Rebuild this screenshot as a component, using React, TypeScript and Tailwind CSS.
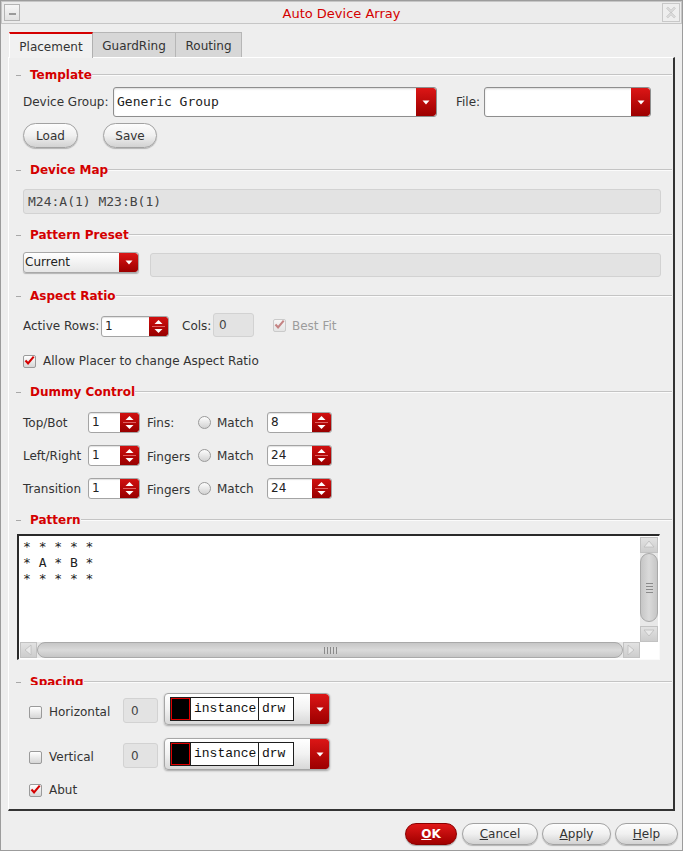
import React from "react";

function DownTri() {
  return (
    <svg width="8" height="5" viewBox="0 0 8 5">
      <path d="M0.5 0.5h7L4 4.5z" fill="#fff" />
    </svg>
  );
}

function DropBtn({ className = "" }: { className?: string }) {
  return (
    <div
      className={
        "flex items-center justify-center self-stretch bg-linear-to-b from-[#dc1616] to-[#9c0000] rounded-r-[3px] " +
        className
      }
    >
      <DownTri />
    </div>
  );
}

function SpinBtn() {
  return (
    <div className="w-[19px] self-stretch rounded-r-[2px] bg-linear-to-b from-[#d01010] to-[#980000] flex flex-col items-center justify-center">
      <svg width="9" height="6" viewBox="0 0 9 6">
        <path d="M0.5 5L4.5 1L8.5 5z" fill="#fff" />
      </svg>
      <div className="w-[13px] h-px bg-[#e06060] my-[1px]" />
      <svg width="9" height="6" viewBox="0 0 9 6">
        <path d="M0.5 1L4.5 5L8.5 1z" fill="#fff" />
      </svg>
    </div>
  );
}

function SpinBox({ value, className }: { value: string; className: string }) {
  return (
    <div
      className={
        "flex h-[21px] rounded-[3px] border border-[#a4a4a4] bg-white overflow-hidden shadow-[inset_0_1px_1px_rgba(0,0,0,0.12)] " +
        className
      }
    >
      <div className="flex-1 pl-[3px] leading-[19px] text-[12px] text-[#222]">{value}</div>
      <SpinBtn />
    </div>
  );
}

function Check({ checked, disabled, className = "" }: { checked?: boolean; disabled?: boolean; className?: string }) {
  return (
    <div
      className={
        "w-[13px] h-[13px] shrink-0 rounded-[2px] border flex items-center justify-center " +
        (disabled
          ? "border-[#cacaca] bg-linear-to-b from-[#f6f6f6] to-[#e4e4e4] "
          : "border-[#9a9a9a] bg-linear-to-b from-[#ffffff] to-[#d6d6d6] ") +
        className
      }
    >
      {checked && (
        <svg width="12" height="11" viewBox="0 0 12 11" className="-mt-[1px]">
          <path
            d="M1.6 5.6L4.4 8.6L10.6 1.2"
            fill="none"
            stroke={disabled ? "#c48383" : "#d40000"}
            strokeWidth="2.3"
          />
        </svg>
      )}
    </div>
  );
}

function Radio() {
  return (
    <div className="w-[13px] h-[13px] shrink-0 rounded-full border border-[#9a9a9a] bg-linear-to-b from-[#fdfdfd] to-[#d2d2d2]" />
  );
}

function Header({ title, className = "" }: { title: string; className?: string }) {
  return (
    <div className={"flex items-center h-[14px] " + className}>
      <div className="ml-[7px] w-[5px] h-px bg-[#a8a8a8]" />
      <div className="ml-[9px] font-bold text-[12px] leading-[14px] text-[#d40000] whitespace-nowrap">
        {title}
      </div>
      <div className="flex-1 mr-[1px] h-[2px] border-t border-t-[#c4c4c4] border-b border-b-[#fbfbfb]" />
    </div>
  );
}

function PillBtn({ children, className = "" }: { children: React.ReactNode; className?: string }) {
  return (
    <div
      className={
        "flex items-center justify-center rounded-full border border-[#a2a2a2] bg-linear-to-b from-[#fdfdfd] via-[#f0f0f0] to-[#d2d2d2] shadow-[0_1px_1px_rgba(0,0,0,0.25)] text-[12px] text-[#333] " +
        className
      }
    >
      {children}
    </div>
  );
}

function GrayField({ children, className = "" }: { children?: React.ReactNode; className?: string }) {
  return (
    <div
      className={
        "rounded-[3px] border border-[#d2d2d2] bg-[#e3e3e3] text-[#444] flex items-center " + className
      }
    >
      {children}
    </div>
  );
}

function LayerCombo() {
  return (
    <div className="ml-[6px] w-[166px] h-[32px] rounded-[4px] border border-[#a6a6a6] bg-linear-to-b from-[#ffffff] via-[#f2f2f2] to-[#d8d8d8] flex items-center shadow-[0_1px_2px_rgba(0,0,0,0.3)] overflow-hidden">
      <div className="ml-[5px] flex h-[24px] border border-[#1e1e1e] bg-white">
        <div className="w-[19px] p-px bg-[#e00000]">
          <div className="w-full h-full bg-black" />
        </div>
        <div className="w-[68px] border-l border-[#1e1e1e] pl-[3px] leading-[22px] text-[13px] text-[#111] font-['Liberation_Mono',monospace]">
          instance
        </div>
        <div className="w-[35px] border-l border-[#1e1e1e] pl-[3px] leading-[22px] text-[13px] text-[#111] font-['Liberation_Mono',monospace]">
          drw
        </div>
      </div>
      <div className="flex-1" />
      <DropBtn className="w-[19px]" />
    </div>
  );
}

function ScrollArrow({ dir, className = "" }: { dir: "up" | "down" | "left" | "right"; className?: string }) {
  const paths: Record<string, string> = {
    up: "M2 9L7 3L12 9z",
    down: "M2 3L7 9L12 3z",
    left: "M9 2L3 7L9 12z",
    right: "M3 2L9 7L3 12z",
  };
  return (
    <div
      className={
        "flex items-center justify-center bg-linear-to-b from-[#e2e2e2] to-[#cdcdcd] border border-[#c2c2c2] " +
        className
      }
    >
      <svg width="14" height="14" viewBox="0 0 14 14">
        <path d={paths[dir]} fill="#e9e9e9" stroke="#bdbdbd" strokeWidth="0.8" />
      </svg>
    </div>
  );
}

export default function App() {
  return (
    <div className="w-[683px] h-[851px] border border-[#9c9c9c] bg-[#eeeeee] font-['DejaVu_Sans',sans-serif] text-[12px] text-[#333] flex flex-col overflow-hidden">
      {/* Title bar */}
      <div className="h-[23px] border border-[#c6c6c6] bg-[#ececec] flex items-center">
        <div className="w-[26px] flex items-center">
          <div className="ml-[2px] w-[16px] h-[17px] border border-[#b4b4b4] bg-linear-to-b from-[#f6f6f6] to-[#e2e2e2] flex items-end justify-center pb-[5px]">
            <div className="w-[7px] h-[2px] bg-[#9a9a9a]" />
          </div>
        </div>
        <div className="flex-1 text-center text-[13px] text-[#d40000] leading-[21px] pt-px">Auto Device Array</div>
        <div className="w-[26px] flex justify-end">
          <div className="mr-[1px] w-[18px] h-[19px] border border-[#c8c8c8] bg-[#eeeeee] flex items-center justify-center">
            <svg width="12" height="13" viewBox="0 0 12 13">
              <path
                d="M2 1.5L6 5.5L10 1.5M2 11.5L6 7.5L10 11.5"
                fill="none"
                stroke="#c2c2c2"
                strokeWidth="2.4"
              />
              <path
                d="M2 1.5L6 5.5L10 1.5M2 11.5L6 7.5L10 11.5"
                fill="none"
                stroke="#f4f4f4"
                strokeWidth="0.9"
              />
            </svg>
          </div>
        </div>
      </div>

      {/* Tabs */}
      <div className="mt-[8px] ml-[8px] flex h-[25px] items-start">
        <div className="relative z-10 w-[84px] h-[26px] border-t-2 border-t-[#d40000] border-l border-l-white border-r border-r-[#b0b0b0] bg-[#f1f1f1] flex items-center justify-center pt-[1px]">
          Placement
        </div>
        <div className="w-[83px] h-[25px] border-t border-[#b6b6b6] border-r bg-[#d7d7d7] flex items-center justify-center pt-[2px]">
          GuardRing
        </div>
        <div className="w-[66px] h-[25px] border-t border-[#b6b6b6] border-r bg-[#d7d7d7] flex items-center justify-center pt-[2px]">
          Routing
        </div>
      </div>

      {/* Panel */}
      <div className="ml-[7px] w-[667px] h-[754px] border-t border-l border-t-white border-l-white border-r-2 border-b-2 border-r-[#333] border-b-[#333] flex flex-col">
        <Header title="Template" className="mt-[10px]" />
        <div className="mt-[5px] ml-[14px] flex items-center h-[30px]">
          <div className="w-[90px] whitespace-nowrap">Device Group:</div>
          <div className="w-[324px] h-[30px] flex rounded-[3px] border border-[#8e8e8e] bg-white shadow-[inset_0_1px_2px_rgba(0,0,0,0.15)] overflow-hidden">
            <div className="flex-1 pl-[3px] leading-[28px] text-[13px] text-[#222] font-['DejaVu_Sans_Mono',monospace]">
              Generic Group
            </div>
            <DropBtn className="w-[20px]" />
          </div>
          <div className="ml-[19px] w-[28px]">File:</div>
          <div className="w-[167px] h-[30px] flex rounded-[3px] border border-[#8e8e8e] bg-white shadow-[inset_0_1px_2px_rgba(0,0,0,0.15)] overflow-hidden">
            <div className="flex-1" />
            <DropBtn className="w-[19px]" />
          </div>
        </div>
        <div className="mt-[6px] ml-[14px] flex h-[25px]">
          <PillBtn className="w-[55px] h-[25px]">Load</PillBtn>
          <PillBtn className="ml-[25px] w-[54px] h-[25px]">Save</PillBtn>
        </div>

        <Header title="Device Map" className="mt-[15px]" />
        <GrayField className="mt-[12px] ml-[14px] w-[638px] h-[25px] pl-[4px] text-[13px] text-[#333] font-['DejaVu_Sans_Mono',monospace]">
          M24:A(1) M23:B(1)
        </GrayField>

        <Header title="Pattern Preset" className="mt-[14px]" />
        <div className="mt-[10px] ml-[14px] flex items-start h-[25px]">
          <div className="w-[116px] h-[21px] flex rounded-[3px] border border-[#a8a8a8] bg-linear-to-b from-[#ffffff] to-[#e6e6e6] shadow-[0_1px_1px_rgba(0,0,0,0.25)] overflow-hidden">
            <div className="flex-1 pl-[1px] leading-[19px] text-[12px] text-[#222]">Current</div>
            <DropBtn className="w-[19px]" />
          </div>
          <GrayField className="mt-[1px] ml-[11px] w-[511px] h-[24px]" />
        </div>

        <Header title="Aspect Ratio" className="mt-[12px]" />
        <div className="mt-[10px] ml-[14px] flex items-center h-[24px]">
          <div className="w-[78px] whitespace-nowrap pt-[2px]">Active Rows:</div>
          <SpinBox value="1" className="w-[68px] mt-[2px]" />
          <div className="ml-[13px] w-[31px] pt-[2px]">Cols:</div>
          <GrayField className="w-[41px] h-[24px] pl-[5px]">0</GrayField>
          <div className="ml-[19px]">
            <Check checked disabled />
          </div>
          <div className="ml-[6px] text-[#9c9c9c] pt-[1px]">Best Fit</div>
        </div>
        <div className="mt-[17px] ml-[14px] flex items-center h-[14px]">
          <Check checked />
          <div className="ml-[7px]">Allow Placer to change Aspect Ratio</div>
        </div>

        <Header title="Dummy Control" className="mt-[17px]" />
        <div className="mt-[13px] ml-[14px] flex flex-col gap-[12px]">
          {[
            { l: "Top/Bot", l2: "Fins:", v: "8" },
            { l: "Left/Right", l2: "Fingers", v: "24" },
            { l: "Transition", l2: "Fingers", v: "24" },
          ].map((r) => (
            <div key={r.l} className="flex items-center h-[21px]">
              <div className="w-[65px] whitespace-nowrap">{r.l}</div>
              <SpinBox value="1" className="w-[52px]" />
              <div className={"ml-[7px] w-[51px] whitespace-nowrap " + (r.l2 === "Fins:" ? "" : "pt-[3px]")}>
                {r.l2}
              </div>
              <Radio />
              <div className="ml-[6px] w-[50px]">Match</div>
              <SpinBox value={r.v} className="w-[65px]" />
            </div>
          ))}
        </div>

        <Header title="Pattern" className="mt-[14px]" />
        <div className="mt-[7px] ml-[8px] w-[643px] h-[126px] border-t-2 border-l-2 border-t-[#2a2a2a] border-l-[#2a2a2a] border-r border-b border-r-[#fafafa] border-b-[#fafafa] bg-white flex flex-col">
          <div className="flex flex-1 min-h-0">
            <div className="flex-1 pl-[4px] pt-[3px] text-[13px] leading-[16px] text-[#222] whitespace-pre font-['DejaVu_Sans_Mono',monospace]">
              {"* * * * *\n* A * B *\n* * * * *"}
            </div>
            <div className="w-[18px] mt-[1px] mr-[1px] flex flex-col bg-[#e8e8e8]">
              <ScrollArrow dir="up" className="h-[16px]" />
              <div className="h-[69px] rounded-full border border-[#a9a9a9] bg-linear-to-r from-[#c6c6c6] via-[#dadada] to-[#c6c6c6] flex flex-col items-center justify-center gap-[2px]">
                <div className="w-[7px] h-px bg-[#8a8a8a]" />
                <div className="w-[7px] h-px bg-[#8a8a8a]" />
                <div className="w-[7px] h-px bg-[#8a8a8a]" />
                <div className="w-[7px] h-px bg-[#8a8a8a]" />
              </div>
              <div className="flex-1" />
              <ScrollArrow dir="down" className="h-[16px]" />
            </div>
          </div>
          <div className="flex h-[17px] pb-[1px]">
            <div className="ml-[1px] flex-1 flex bg-[#e8e8e8]">
              <ScrollArrow dir="left" className="w-[17px]" />
              <div className="flex-1 rounded-full border border-[#a9a9a9] bg-linear-to-b from-[#c6c6c6] via-[#dadada] to-[#c6c6c6] flex items-center justify-center gap-[2px]">
                <div className="w-px h-[7px] bg-[#8a8a8a]" />
                <div className="w-px h-[7px] bg-[#8a8a8a]" />
                <div className="w-px h-[7px] bg-[#8a8a8a]" />
                <div className="w-px h-[7px] bg-[#8a8a8a]" />
                <div className="w-px h-[7px] bg-[#8a8a8a]" />
              </div>
              <ScrollArrow dir="right" className="w-[17px]" />
            </div>
            <div className="w-[19px]" />
          </div>
        </div>

        <div className="mt-[15px] h-[10px] overflow-hidden">
          <Header title="Spacing" />
        </div>
        <div className="mt-[8px] ml-[20px] flex items-center h-[32px]">
          <Check className="mt-[6px]" />
          <div className="ml-[7px] w-[74px] mt-[6px]">Horizontal</div>
          <GrayField className="w-[35px] h-[25px] pl-[7px] mt-[3px]">0</GrayField>
          <LayerCombo />
        </div>
        <div className="mt-[13px] ml-[20px] flex items-center h-[32px]">
          <Check className="mt-[6px]" />
          <div className="ml-[7px] w-[74px] mt-[6px]">Vertical</div>
          <GrayField className="w-[35px] h-[25px] pl-[7px] mt-[3px]">0</GrayField>
          <LayerCombo />
        </div>
        <div className="mt-[13px] ml-[20px] flex items-center h-[14px]">
          <Check checked />
          <div className="ml-[7px]">Abut</div>
        </div>
      </div>

      {/* Bottom buttons */}
      <div className="mt-[12px] flex justify-end pr-[4px] h-[22px]">
        <div className="w-[52px] h-[22px] rounded-full border border-[#8a0000] bg-linear-to-b from-[#e01818] to-[#a00000] shadow-[0_1px_1px_rgba(0,0,0,0.3)] flex items-center justify-center text-white font-bold">
          <span>
            <span className="underline">O</span>K
          </span>
        </div>
        <PillBtn className="ml-[5px] w-[76px] h-[22px]">
          <span>
            <span className="underline">C</span>ancel
          </span>
        </PillBtn>
        <PillBtn className="ml-[4px] w-[69px] h-[22px]">
          <span>
            <span className="underline">A</span>pply
          </span>
        </PillBtn>
        <PillBtn className="ml-[4px] w-[63px] h-[22px]">
          <span>
            <span className="underline">H</span>elp
          </span>
        </PillBtn>
      </div>
    </div>
  );
}
